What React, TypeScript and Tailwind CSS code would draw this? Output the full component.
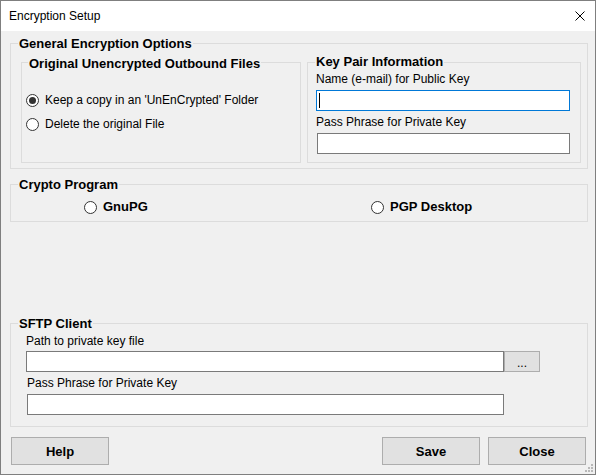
import React from 'react';

type GroupProps = {
  title: string;
  className?: string;
  titlePos?: string;
  children?: React.ReactNode;
};

// WinForms-style group box: thin light border, caption sitting over the top line
const GroupBox = ({ title, className = '', titlePos = '-top-2 left-[7px]', children }: GroupProps) => (
  <div className={`relative border border-[#dcdcdc] ${className}`}>
    <span className={`absolute bg-[#f0f0f0] px-px text-[13px] font-bold leading-4 text-black whitespace-nowrap ${titlePos}`}>
      {title}
    </span>
    {children}
  </div>
);

const Radio = ({ label, checked = false, bold = false }: { label: string; checked?: boolean; bold?: boolean }) => (
  <div className="flex h-[24px] items-center gap-[6px]">
    <span className="flex h-[13px] w-[13px] shrink-0 items-center justify-center rounded-full border border-[#333333] bg-white">
      {checked && <span className="h-[7px] w-[7px] rounded-full bg-[#333333]" />}
    </span>
    <span className={bold ? 'text-[13px] font-bold leading-4' : 'text-[12px] leading-[15px]'}>{label}</span>
  </div>
);

const Label = ({ children, className = '' }: { children: React.ReactNode; className?: string }) => (
  <div className={`text-[12px] leading-[15px] text-black ${className}`}>{children}</div>
);

const Button = ({ children, className = '' }: { children: React.ReactNode; className?: string }) => (
  <div
    className={`flex h-[28px] w-[98px] items-center justify-center border border-[#adadad] bg-[#e1e1e1] pt-px text-[13px] font-bold text-black ${className}`}
  >
    {children}
  </div>
);

export default function App() {
  return (
    <div className="relative flex h-[475px] w-[596px] flex-col overflow-hidden border border-[#7f7f7f] font-['Liberation_Sans',Arial,sans-serif] text-black">
      {/* Title bar */}
      <div className="flex h-[30px] shrink-0 items-center bg-white pl-[8px]">
        <span className="text-[12px] leading-[15px]">Encryption Setup</span>
        <svg className="ml-auto mr-[10px]" width="10" height="10" viewBox="0 0 10 10">
          <path d="M0.5 0.5 L9.5 9.5 M9.5 0.5 L0.5 9.5" stroke="#000" strokeWidth="1" fill="none" />
        </svg>
      </div>

      {/* Client area */}
      <div className="flex flex-1 flex-col bg-[#f0f0f0] pl-[9px] pr-[7px]">
        <GroupBox title="General Encryption Options" className="mt-[12px] flex h-[126px] gap-[6px] pl-[10px] pr-[6px] pt-[18px]">
          <GroupBox
            title="Original Unencrypted Outbound Files"
            titlePos="-top-[7px] left-[6px]"
            className="h-[101px] w-[280px] pl-[4px] pt-[25px]"
          >
            <Radio label="Keep a copy in an 'UnEnCrypted' Folder" checked />
            <Radio label="Delete the original File" />
          </GroupBox>

          <GroupBox title="Key Pair Information" titlePos="-top-[9px] left-[7px]" className="h-[101px] w-[274px] pl-[8px] pt-[9px]">
            <Label>Name (e-mail) for Public Key</Label>
            <div className="mt-[3px] flex h-[21px] w-[254px] items-center border border-[#0078d7] bg-white pl-[2px]">
              <span className="h-[15px] w-px bg-black" />
            </div>
            <Label className="mt-[4px]">Pass Phrase for Private Key</Label>
            <div className="ml-px mt-[3px] h-[21px] w-[253px] border border-[#7a7a7a] bg-white" />
          </GroupBox>
        </GroupBox>

        <GroupBox title="Crypto Program" className="mt-[15px] flex h-[38px] pl-[73px] pt-[10px]">
          <div className="w-[287px]">
            <Radio label="GnuPG" bold />
          </div>
          <Radio label="PGP Desktop" bold />
        </GroupBox>

        <GroupBox title="SFTP Client" className="mt-[101px] h-[104px] pl-[15px] pt-[10px]">
          <Label>Path to private key file</Label>
          <div className="mt-[2px] flex">
            <div className="h-[21px] w-[478px] border border-[#7a7a7a] bg-white" />
            <div className="flex h-[21px] w-[36px] justify-center border border-[#adadad] bg-[#e1e1e1] pt-[4px] text-[12px] leading-[15px]">
              ...
            </div>
          </div>
          <Label className="ml-px mt-[4px]">Pass Phrase for Private Key</Label>
          <div className="ml-px mt-[3px] h-[21px] w-[477px] border border-[#7a7a7a] bg-white" />
        </GroupBox>

        <div className="mt-[10px] flex">
          <Button className="ml-px">Help</Button>
          <Button className="ml-auto">Save</Button>
          <Button className="ml-[8px] mr-[2px]">Close</Button>
        </div>
      </div>

      {/* Size grip */}
      <svg className="absolute bottom-[2px] right-[2px]" width="8" height="8" viewBox="0 0 8 8">
        <g fill="#b8b8b8">
          <rect x="6" y="0" width="2" height="2" />
          <rect x="3" y="3" width="2" height="2" />
          <rect x="6" y="3" width="2" height="2" />
          <rect x="0" y="6" width="2" height="2" />
          <rect x="3" y="6" width="2" height="2" />
          <rect x="6" y="6" width="2" height="2" />
        </g>
      </svg>
    </div>
  );
}
